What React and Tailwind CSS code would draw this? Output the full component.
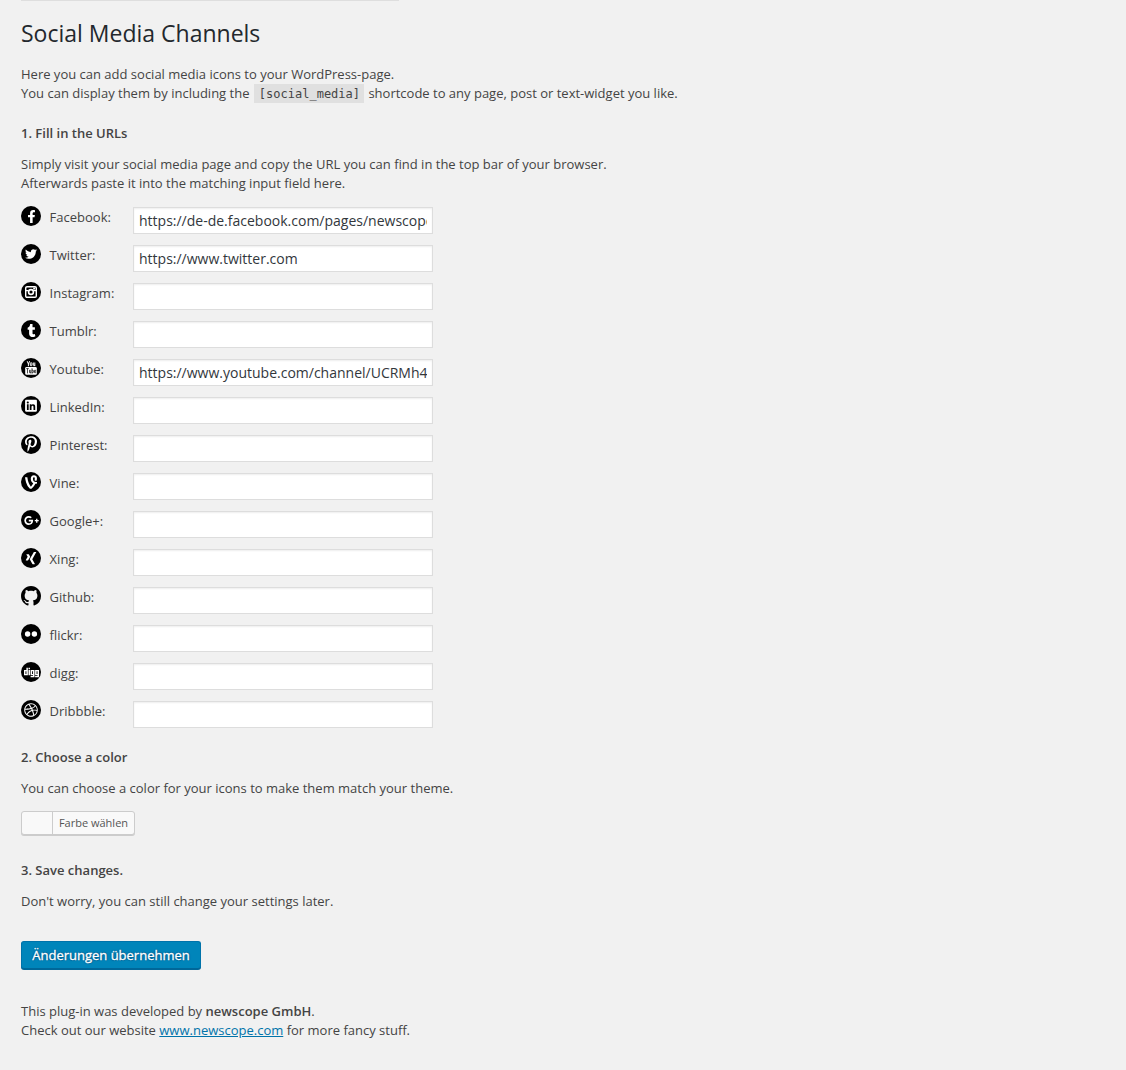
import React from "react";
import {
  FaFacebookF,
  FaTwitter,
  FaTumblr,
  FaPinterestP,
  FaVine,
  FaGooglePlusG,
  FaXing,
  FaDigg,
  FaDribbble,
} from "react-icons/fa";

function Disc({ children }) {
  return (
    <span className="flex h-5 w-5 shrink-0 items-center justify-center rounded-full bg-black text-white">
      {children}
    </span>
  );
}

function InstagramIcon() {
  return (
    <svg viewBox="0 0 12 12" className="h-3 w-3">
      <rect x="0.7" y="0.7" width="10.6" height="10.6" rx="1.3" fill="none" stroke="#fff" strokeWidth="1.4" />
      <path d="M0.6 4.6H3.2M8.8 4.6H11.4" stroke="#fff" strokeWidth="1.2" />
      <circle cx="6" cy="6" r="2.4" fill="none" stroke="#fff" strokeWidth="1.6" />
      <rect x="8.2" y="1.6" width="2" height="1.9" fill="#fff" />
    </svg>
  );
}

function YoutubeIcon() {
  return (
    <svg viewBox="0 0 12 14" className="h-3.5 w-3">
      <path
        d="M2.2 0.2L3.4 3V5.2M4.6 0.2L3.4 3M5.3 2.3Q5.3 1.7 6.1 1.7T6.9 2.3V4.1Q6.9 4.8 6.1 4.800T5.300 4.100ZM8.300 1.500V4.300Q8.400 5.100 9.800 4.200M9.800 1.500V5.200"
        fill="none"
        stroke="#fff"
        strokeWidth="1"
      />
      <rect x="0.2" y="6" width="11.6" height="7.800" rx="1.300" fill="#fff" />
      <path
        d="M1.200 7.600H3.800M2.500 7.600V12.400M4.500 8.800V11.600Q4.800 12.300 5.800 11.500M5.800 8.800V12.400M7 7.200V12.400M7 9.200Q8.300 8.600 8.300 9.700V11.300Q8.200 12.300 7 11.600M10.800 11Q10.700 12 10.100 11.900Q9.400 11.900 9.400 11V9.800Q9.500 9 10.100 9T10.800 10.300H9.400"
        fill="none"
        stroke="#000"
        strokeWidth="0.7"
      />
    </svg>
  );
}

function LinkedinIcon() {
  return (
    <svg viewBox="0 0 448 512" className="h-[13.5px] w-[12px]" fill="#fff">
      <path d="M416 32H31.900C14.300 32 0 46.500 0 64.300v383.400C0 465.500 14.300 480 31.900 480H416c17.600 0 32-14.500 32-32.300V64.300c0-17.800-14.400-32.300-32-32.300zM135.400 416H69V202.200h66.500V416zm-33.200-243c-21.300 0-38.500-17.300-38.500-38.500S80.900 96 102.200 96c21.200 0 38.500 17.300 38.500 38.500 0 21.300-17.200 38.500-38.500 38.500zm282.100 243h-66.400V312c0-24.800-.5-56.700-34.500-56.700-34.600 0-39.900 27-39.900 54.900V416h-66.400V202.200h63.700v29.200h.9c8.900-16.800 30.600-34.500 62.900-34.500 67.200 0 79.700 44.300 79.700 101.900V416z" />
    </svg>
  );
}

function GithubIcon() {
  return (
    <svg viewBox="0 0 16 16" className="h-5 w-5 shrink-0" fill="#000">
      <path d="M8 0C3.580 0 0 3.580 0 8c0 3.540 2.290 6.530 5.470 7.590.4.070.55-.17.55-.38 0-.19-.01-.82-.01-1.490-2.010.37-2.530-.49-2.690-.94-.09-.23-.48-.94-.82-1.130-.28-.15-.68-.52-.01-.53.63-.01 1.080.58 1.230.82.72 1.210 1.870.87 2.330.66.07-.52.28-.87.51-1.070-1.780-.2-3.640-.89-3.640-3.950 0-.87.31-1.590.82-2.150-.08-.2-.36-1.020.08-2.120 0 0 .67-.21 2.200.82.64-.18 1.320-.27 2-.27s1.360.09 2 .27c1.530-1.040 2.200-.82 2.200-.82.44 1.100.16 1.920.08 2.120.51.56.82 1.270.82 2.150 0 3.070-1.870 3.750-3.650 3.950.29.25.54.73.54 1.480 0 1.070-.01 1.930-.01 2.200 0 .21.15.46.55.38A8.010 8.010 0 0 0 16 8c0-4.420-3.580-8-8-8z" />
    </svg>
  );
}

function FlickrIcon() {
  return (
    <svg viewBox="0 0 14 6" className="h-1.5 w-3.5" fill="#fff">
      <circle cx="3.600" cy="3" r="2.700" />
      <circle cx="10.400" cy="3" r="2.700" />
    </svg>
  );
}

const channels = [
  { label: "Facebook:", icon: <Disc><FaFacebookF size={13} /></Disc>, value: "https://de-de.facebook.com/pages/newscope" },
  { label: "Twitter:", icon: <Disc><FaTwitter size={12} /></Disc>, value: "https://www.twitter.com" },
  { label: "Instagram:", icon: <Disc><InstagramIcon /></Disc> },
  { label: "Tumblr:", icon: <Disc><FaTumblr size={13} /></Disc> },
  { label: "Youtube:", icon: <Disc><YoutubeIcon /></Disc>, value: "https://www.youtube.com/channel/UCRMh4" },
  { label: "LinkedIn:", icon: <Disc><LinkedinIcon /></Disc> },
  { label: "Pinterest:", icon: <Disc><FaPinterestP size={16} /></Disc> },
  { label: "Vine:", icon: <Disc><FaVine size={16} /></Disc> },
  { label: "Google+:", icon: <Disc><FaGooglePlusG size={15} /></Disc> },
  { label: "Xing:", icon: <Disc><FaXing size={14} /></Disc> },
  { label: "Github:", icon: <GithubIcon /> },
  { label: "flickr:", icon: <Disc><FlickrIcon /></Disc> },
  { label: "digg:", icon: <Disc><FaDigg size={15} /></Disc> },
  { label: "Dribbble:", icon: <Disc><FaDribbble size={14} /></Disc> },
];

function Heading({ children }) {
  return <h4 className="mb-3 text-[13px] font-semibold leading-[19px]">{children}</h4>;
}

export default function App() {
  return (
    <main className="flex h-[1070px] w-[1126px] flex-col items-start overflow-hidden bg-[#f1f1f1] pl-[21px] font-['Open_Sans',sans-serif] text-[13px] leading-[19px] text-[#444]">
      <div className="h-px w-[378px] bg-[#dedede]" />
      <h2 className="mt-[17px] mb-[17px] text-[23px] leading-[30px] font-normal text-[#23282d]">Social Media Channels</h2>
      <p className="mb-[21px]">
        Here you can add social media icons to your WordPress-page.
        <br />
        You can display them by including the{" "}
        <code className="mx-px bg-[#e0e0e0] pr-1 pl-[5px] pt-[3px] pb-[2px] font-['DejaVu_Sans_Mono',monospace] text-[12px] leading-[13px]">[social_media]</code>{" "}
        shortcode to any page, post or text-widget you like.
      </p>

      <Heading>1. Fill in the URLs</Heading>
      <p className="mb-[13px]">
        Simply visit your social media page and copy the URL you can find in the top bar of your browser.
        <br />
        Afterwards paste it into the matching input field here.
      </p>
      <div className="mb-[10px] flex flex-col">
        {channels.map((c) => (
          <label key={c.label} className="flex h-[38px] items-start">
            {c.icon}
            <span className="mt-[2px] w-[92px] pl-[8.6px]">{c.label}</span>
            <input
              readOnly
              defaultValue={c.value || ""}
              className="mt-px h-[27px] w-[300px] border border-[#ddd] bg-white px-[5px] text-[14px] text-[#32373c] shadow-[inset_0_1px_2px_rgba(0,0,0,0.07)] outline-none"
            />
          </label>
        ))}
      </div>

      <Heading>2. Choose a color</Heading>
      <p className="mb-[13px]">You can choose a color for your icons to make them match your theme.</p>
      <button className="mb-[26px] flex h-6 w-[114px] rounded-[3px] border border-[#ccc] bg-[#f9f9f9] text-[11px] leading-[22px] text-[#555] shadow-[0_1px_0_#ccc]">
        <span className="h-full w-[31px] border-r border-[#ccc]" />
        <span className="flex-1 text-center whitespace-nowrap">Farbe wählen</span>
      </button>

      <Heading>3. Save changes.</Heading>
      <p className="mb-[30px]">Don't worry, you can still change your settings later.</p>
      <button className="mb-[33px] h-[28px] w-[180px] rounded-[3px] border border-[#0073aa] border-b-[#006799] bg-[#0085ba] text-[13px] leading-[26px] whitespace-nowrap text-white shadow-[0_1px_0_#006799] [-webkit-text-stroke:0.3px_white] [text-shadow:0_-1px_1px_#006799,1px_0_1px_#006799,0_1px_1px_#006799,-1px_0_1px_#006799]">
        Änderungen übernehmen
      </button>

      <p>
        This plug-in was developed by <strong className="font-semibold">newscope GmbH</strong>.
        <br />
        Check out our website <a className="text-[#0073aa] underline">www.newscope.com</a> for more fancy stuff.
      </p>
    </main>
  );
}
